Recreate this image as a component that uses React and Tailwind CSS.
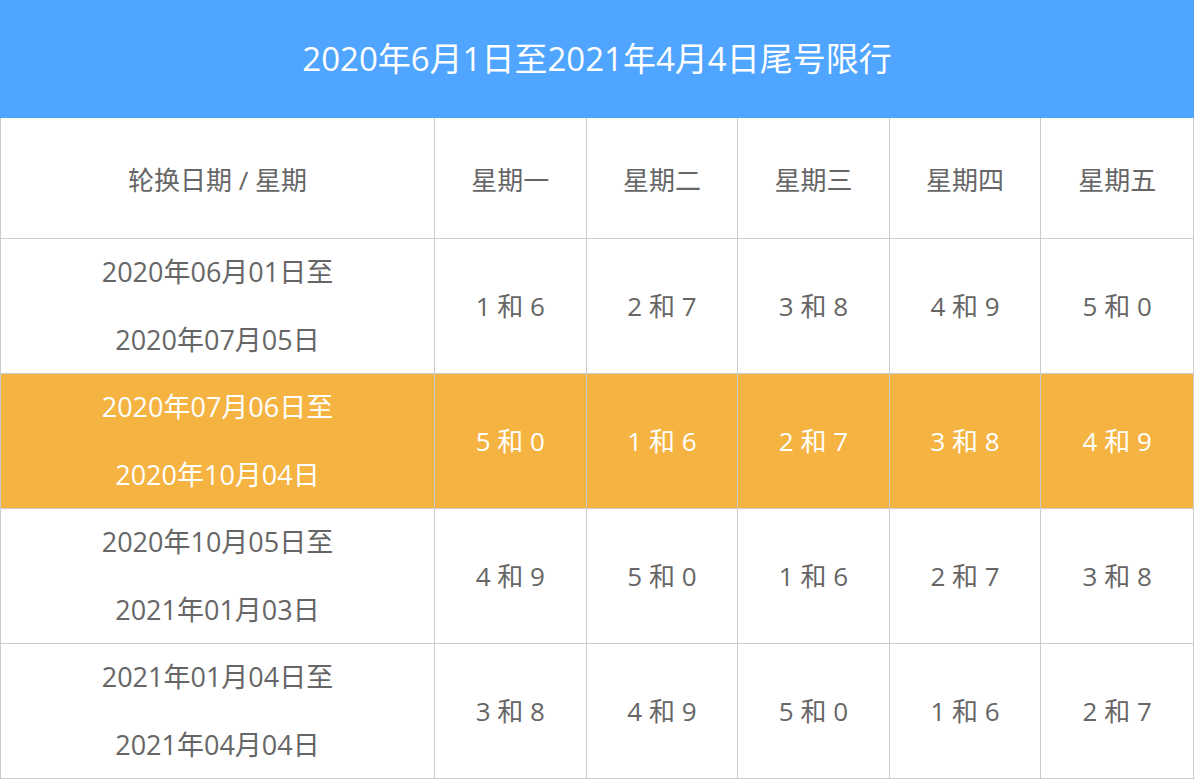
import React from "react";

const rows = [
  ["2020年06月01日至", "2020年07月05日", ["1 和 6", "2 和 7", "3 和 8", "4 和 9", "5 和 0"], false],
  ["2020年07月06日至", "2020年10月04日", ["5 和 0", "1 和 6", "2 和 7", "3 和 8", "4 和 9"], true],
  ["2020年10月05日至", "2021年01月03日", ["4 和 9", "5 和 0", "1 和 6", "2 和 7", "3 和 8"], false],
  ["2021年01月04日至", "2021年04月04日", ["3 和 8", "4 和 9", "5 和 0", "1 和 6", "2 和 7"], false],
];
const days = ["星期一", "星期二", "星期三", "星期四", "星期五"];
const font = { fontFamily: '"Open Sans","Noto Sans CJK SC",sans-serif' };

export default function App() {
  return (
    <div className="w-[1194px] h-[780px] bg-white" style={font}>
      <div className="h-[118px] bg-[#4fa5ff] flex items-center justify-center text-white text-[33px]">
        2020年6月1日至2021年4月4日尾号限行
      </div>
      <div className="grid grid-cols-[434px_repeat(5,1fr)] border-l border-r border-[#cccccc] text-[26px] text-[#666666]">
        <div className="h-[121px] flex items-center justify-center border-r border-b border-[#cccccc] pt-[4px]">轮换日期 / 星期</div>
        {days.map((d, i) => (
          <div key={d} className={`h-[121px] flex items-center justify-center border-b border-[#cccccc] pt-[4px] ${i < 4 ? "border-r" : ""}`}>{d}</div>
        ))}
        {rows.map(([a, b, vals, hl]) => (
          <React.Fragment key={a}>
            <div className={`h-[135px] flex flex-col items-center justify-center gap-[20px] text-[27px] border-r border-b border-[#cccccc] ${hl ? "bg-[#f5b342] text-white" : ""}`}>
              <div className="leading-[48px]">{a}</div>
              <div className="-mt-[20px] pt-[20px] leading-[48px]">{b}</div>
            </div>
            {vals.map((v, i) => (
              <div key={i} className={`h-[135px] flex items-center justify-center border-b border-[#cccccc] ${i < 4 ? "border-r" : ""} ${hl ? "bg-[#f5b342] text-white" : ""}`}>{v}</div>
            ))}
          </React.Fragment>
        ))}
      </div>
    </div>
  );
}
